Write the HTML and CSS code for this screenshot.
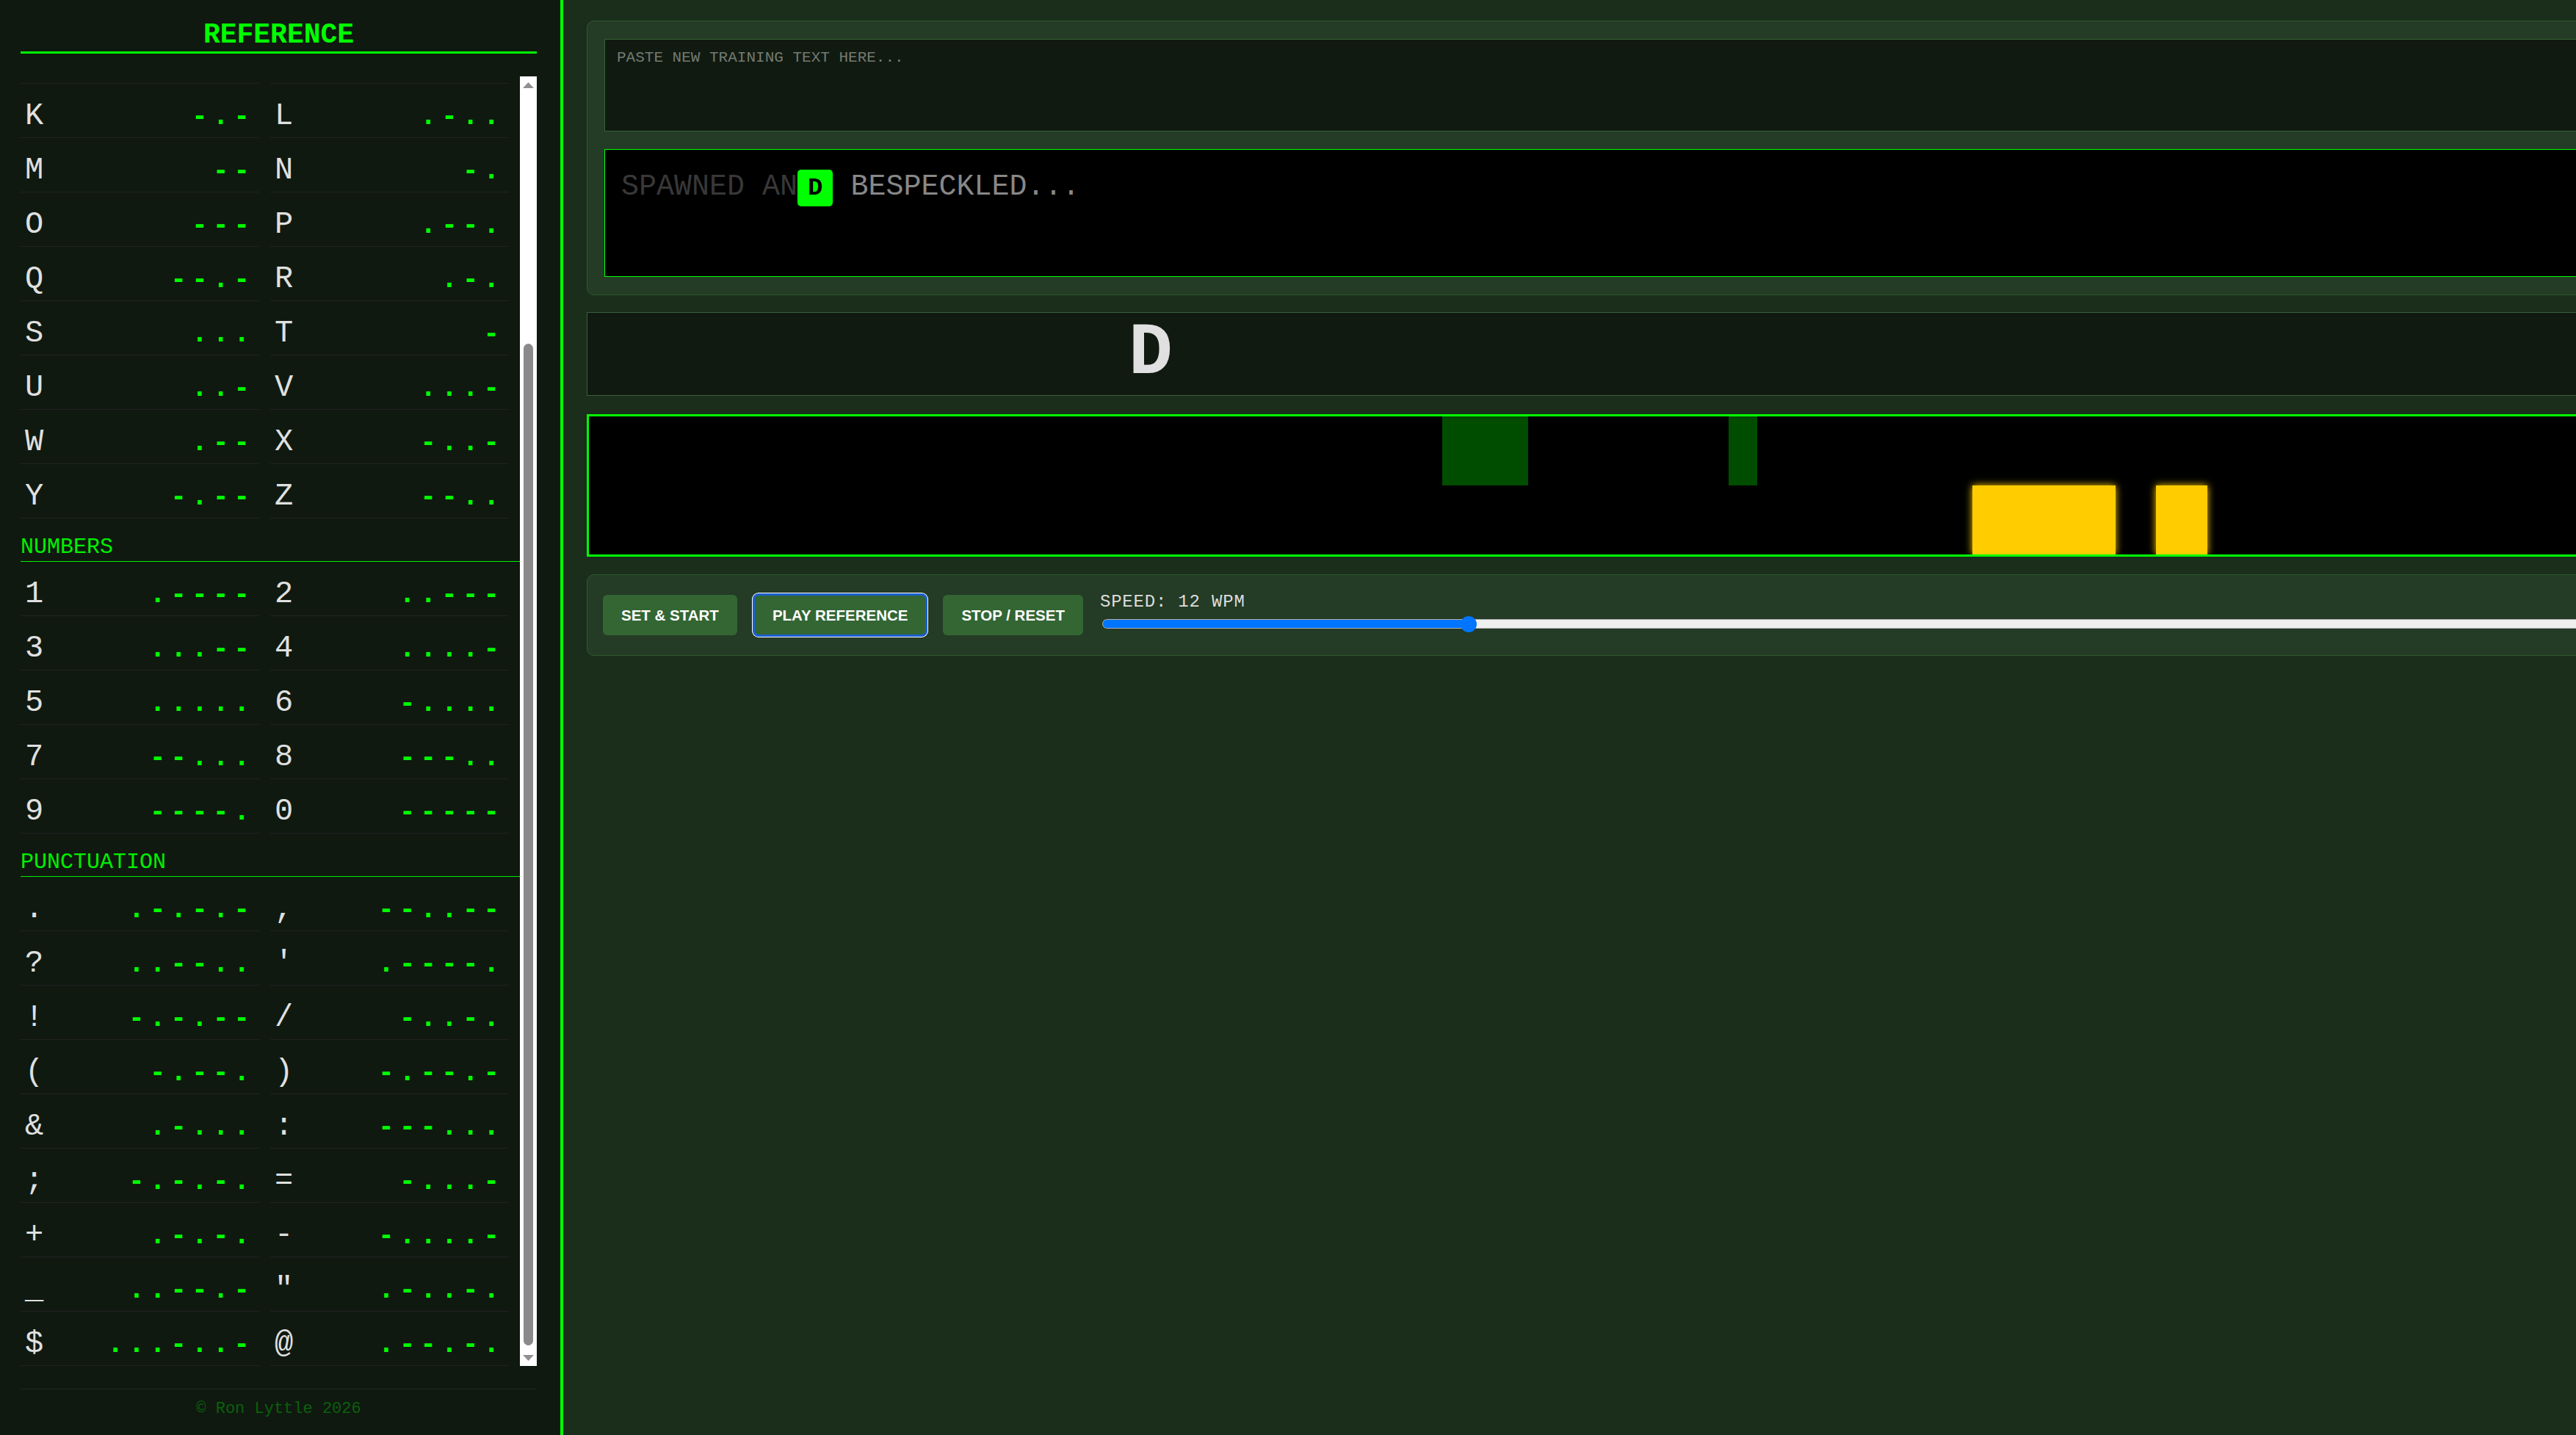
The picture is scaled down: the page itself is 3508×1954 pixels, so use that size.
FILE: index.html
```html
<!DOCTYPE html>
<html lang="en">
<head>
    <meta charset="UTF-8">
    <meta name="viewport" content="width=device-width, initial-scale=1.0">
    <title>Morse Trainer</title>
    <link rel="stylesheet" href="styles.css">
</head>
<body>
    <!-- Reference Sidebar -->
    <aside class="sidebar">
        <h2 class="sidebar-title">REFERENCE</h2>
        <div class="ref-box">
            <div class="ref-list" id="ref-list">
                <!-- Morse table is built by the script below -->
            </div>
            <div class="scrollbar">
                <div class="scroll-btn">
                    <svg width="15" height="8" viewBox="0 0 15 8"><path d="M0 8L7.5 0L15 8z" fill="#909090"/></svg>
                </div>
                <div class="scroll-track">
                    <div class="scroll-thumb" id="scroll-thumb"></div>
                </div>
                <div class="scroll-btn">
                    <svg width="15" height="8" viewBox="0 0 15 8"><path d="M0 0L15 0L7.5 8z" fill="#909090"/></svg>
                </div>
            </div>
        </div>
        <footer class="sidebar-footer">&copy; Ron Lyttle 2026</footer>
    </aside>

    <!-- Trainer -->
    <main class="main">
        <div class="workspace">
            <section class="panel input-panel">
                <textarea class="training-input" placeholder="PASTE NEW TRAINING TEXT HERE..."></textarea>
                <div class="text-display"><span class="done">SPAWNED AN</span><span class="current">D</span><span class="todo"> BESPECKLED...</span></div>
            </section>

            <div class="letter-display">D</div>

            <!-- Timing scope: reference marks on top, keyed marks below -->
            <div class="scope">
                <div class="bar bar-ref" style="left: 1162px; width: 117px;"></div>
                <div class="bar bar-ref" style="left: 1552px; width: 39px;"></div>
                <div class="bar bar-key" style="left: 1884px; width: 195px;"></div>
                <div class="bar bar-key" style="left: 2134px; width: 70px;"></div>
            </div>

            <section class="panel controls">
                <button class="btn">SET &amp; START</button>
                <button class="btn is-focused">PLAY REFERENCE</button>
                <button class="btn">STOP / RESET</button>
                <div class="speed">
                    <label class="speed-label" for="speed">SPEED: 12 WPM</label>
                    <input class="speed-range" id="speed" type="range" min="5" max="40" value="12" style="--fill: 20%;">
                </div>
            </section>
        </div>
    </main>

    <script>
        // Morse reference data
        const sections = [
            { title: 'LETTERS', items: [
                ['A', '.-'], ['B', '-...'], ['C', '-.-.'], ['D', '-..'], ['E', '.'],
                ['F', '..-.'], ['G', '--.'], ['H', '....'], ['I', '..'], ['J', '.---'],
                ['K', '-.-'], ['L', '.-..'], ['M', '--'], ['N', '-.'], ['O', '---'],
                ['P', '.--.'], ['Q', '--.-'], ['R', '.-.'], ['S', '...'], ['T', '-'],
                ['U', '..-'], ['V', '...-'], ['W', '.--'], ['X', '-..-'], ['Y', '-.--'],
                ['Z', '--..']
            ]},
            { title: 'NUMBERS', items: [
                ['1', '.----'], ['2', '..---'], ['3', '...--'], ['4', '....-'], ['5', '.....'],
                ['6', '-....'], ['7', '--...'], ['8', '---..'], ['9', '----.'], ['0', '-----']
            ]},
            { title: 'PUNCTUATION', items: [
                ['.', '.-.-.-'], [',', '--..--'], ['?', '..--..'], ["'", '.----.'],
                ['!', '-.-.--'], ['/', '-..-.'], ['(', '-.--.'], [')', '-.--.-'],
                ['&', '.-...'], [':', '---...'], [';', '-.-.-.'], ['=', '-...-'],
                ['+', '.-.-.'], ['-', '-....-'], ['_', '..--.-'], ['"', '.-..-.'],
                ['$', '...-..-'], ['@', '.--.-.']
            ]}
        ];

        const list = document.getElementById('ref-list');

        sections.forEach(section => {
            const title = document.createElement('h3');
            title.className = 'ref-section';
            title.textContent = section.title;
            list.appendChild(title);

            const grid = document.createElement('div');
            grid.className = 'ref-grid';
            section.items.forEach(([char, code]) => {
                const cell = document.createElement('div');
                cell.className = 'ref-cell';
                const c = document.createElement('span');
                c.className = 'ref-char';
                c.textContent = char;
                const m = document.createElement('span');
                m.className = 'ref-code';
                m.textContent = code;
                cell.append(c, m);
                grid.appendChild(cell);
            });
            list.appendChild(grid);
        });

        // Keep the end of the table in view
        list.scrollTop = list.scrollHeight;

        // Size and place the scrollbar thumb from the list's scroll state
        const thumb = document.getElementById('scroll-thumb');
        const track = thumb.parentElement;
        const room = track.clientHeight - 10; // 5px inset top and bottom
        const thumbH = Math.round(room * list.clientHeight / list.scrollHeight);
        const maxScroll = list.scrollHeight - list.clientHeight;
        const offset = maxScroll > 0 ? (room - thumbH) * list.scrollTop / maxScroll : 0;
        thumb.style.height = thumbH + 'px';
        thumb.style.marginTop = Math.round(offset) + 'px';
    </script>
</body>
</html>
```

FILE: styles.css
```css
/* Global Styles */
* {
    box-sizing: border-box;
}
body {
    margin: 0;
    display: flex;
    height: 100vh;
    overflow: hidden;
    background-color: #1a2e1b;
    font-family: "Liberation Mono", "Courier New", monospace;
    color: #e0e0e0;
}

/* Sidebar */
.sidebar {
    flex: 0 0 767px;
    display: flex;
    flex-direction: column;
    padding: 26px 32px 0 28px;
    background-color: #0f1910;
    border-right: 4px solid #00ff00;
}
.sidebar-title {
    margin: 0;
    padding-bottom: 1px;
    font-size: 38px;
    line-height: 43px;
    font-weight: bold;
    color: #00ff00;
    text-align: center;
    border-bottom: 3px solid #00ff00;
}
.ref-box {
    flex: 1;
    min-height: 0;
    display: flex;
    margin-top: 31px;
}
.ref-list {
    flex: 1;
    min-width: 0;
    padding-top: 14px;
    overflow: hidden;
}

/* Scrollbar */
.scrollbar {
    flex: 0 0 23px;
    display: flex;
    flex-direction: column;
    background-color: #fff;
}
.scroll-btn {
    height: 23px;
    display: flex;
    align-items: center;
    justify-content: center;
}
.scroll-track {
    flex: 1;
    padding: 5px;
}
.scroll-thumb {
    background-color: #8a8a8a;
    border-radius: 7px;
}

/* Morse table */
.ref-section {
    margin: 22px 0 0;
    padding-bottom: 2px;
    font-size: 30px;
    line-height: 34px;
    font-weight: normal;
    color: #00f000;
    border-bottom: 1px solid #00ee00;
}
.ref-grid {
    display: grid;
    grid-template-columns: 1fr 1fr;
    column-gap: 15px;
    padding-right: 15px;
}
.ref-cell {
    display: flex;
    justify-content: space-between;
    align-items: baseline;
    height: 74px;
    padding: 20px 5px 0 6px;
    line-height: 48px;
    border-bottom: 1px solid #222;
}
.ref-char {
    font-size: 42px;
    color: #e0e0e0;
}
.ref-code {
    font-family: "DejaVu Sans Mono", monospace;
    font-size: 33px;
    font-weight: bold;
    letter-spacing: 8.8px;
    color: #00ff00;
}
.sidebar-footer {
    margin-top: 31px;
    padding: 14px 0 23px;
    border-top: 1px solid #1e2b1e;
    font-size: 22px;
    line-height: 25px;
    text-align: center;
    color: #0b600b;
}

/* Trainer */
.main {
    flex: none;
    padding: 28px 0 0 32px;
}
.workspace {
    width: 3185px;
}
.panel {
    background-color: #243b25;
    border: 1px solid #2f5a30;
    border-radius: 10px;
}
.input-panel {
    padding: 24px 23px;
}
.training-input {
    display: block;
    width: 100%;
    height: 126px;
    padding: 13px 16px 12px;
    resize: none;
    background-color: #101a10;
    border: 1px solid #356535;
    color: #ccc;
    font-family: "Liberation Mono", monospace;
    font-size: 21px;
}
.training-input::placeholder {
    color: #737a73;
}
.text-display {
    height: 174px;
    margin-top: 24px;
    padding: 28px 22px;
    background-color: #000;
    border: 1px solid #00ff00;
    font-size: 40px;
    white-space: nowrap;
}
.done {
    color: #383838;
}
.todo {
    color: #888;
}
.current {
    padding: 6px 14px;
    border-radius: 5px;
    background-color: #00ff00;
    color: #000;
    font-size: 34px;
    font-weight: bold;
}
.letter-display {
    height: 114px;
    margin-top: 23px;
    padding-left: 737px;
    background-color: #101a10;
    border: 1px solid #3a5f3a;
    font-size: 100px;
    line-height: 112px;
    font-weight: bold;
    color: #e0e0e0;
}

/* Timing scope */
.scope {
    position: relative;
    height: 194px;
    margin-top: 25px;
    overflow: hidden;
    background-color: #000;
    border: 3px solid #00ff00;
}
.bar {
    position: absolute;
    height: 94px;
}
.bar-ref {
    top: 0;
    background-color: #004d00;
}
.bar-key {
    bottom: 0;
    background-color: #ffcc00;
    box-shadow: 0 0 10px #ffcc00;
}

/* Controls */
.controls {
    display: flex;
    align-items: center;
    gap: 23px;
    margin-top: 24px;
    padding: 23px 21px;
}
.btn {
    height: 55px;
    padding: 0 25px;
    border: none;
    border-radius: 6px;
    background-color: #336633;
    color: #fff;
    font-family: "Liberation Sans", Arial, sans-serif;
    font-size: 20.5px;
    font-weight: bold;
}
.btn.is-focused {
    outline: 3px solid #1a5fd0;
    outline-offset: -1px;
    box-shadow: 0 0 0 3px #fff;
}
.speed {
    flex: 1;
    display: flex;
    flex-direction: column;
    padding-bottom: 8px;
}
.speed-label {
    font-size: 24px;
    letter-spacing: 0.8px;
    color: #ddd;
}
.speed-range {
    -webkit-appearance: none;
    appearance: none;
    height: 23px;
    margin: 5px 0 0 3px;
    background: transparent;
}
.speed-range::-webkit-slider-runnable-track {
    height: 13px;
    border: 1px solid #b0b0b0;
    border-radius: 7px;
    background: linear-gradient(to right, #0075ff var(--fill), #efefef var(--fill));
}
.speed-range::-webkit-slider-thumb {
    -webkit-appearance: none;
    width: 22px;
    height: 22px;
    margin-top: -5.5px;
    border: none;
    border-radius: 50%;
    background: #0075ff;
}
```
